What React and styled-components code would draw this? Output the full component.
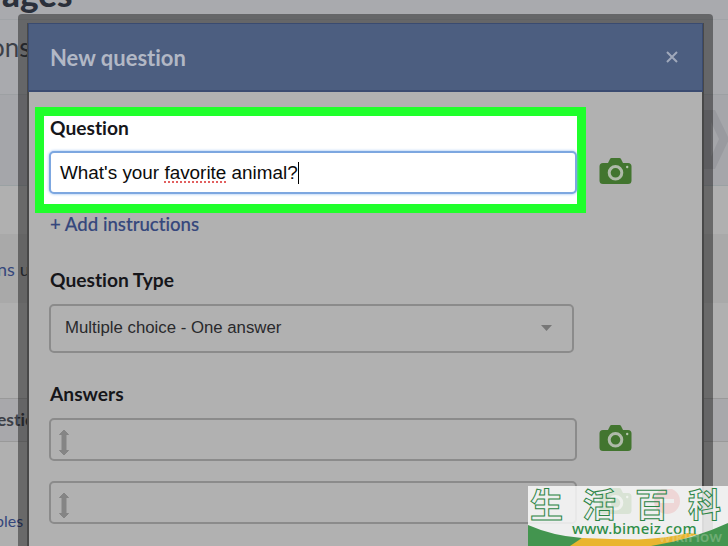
import React from "react";
import styled, { createGlobalStyle } from "styled-components";

const GlobalStyle = createGlobalStyle`
  * {
    box-sizing: border-box;
  }

  body {
    margin: 0;
    overflow: hidden;
    background: #b0b0b0;
    font-family: Lato, sans-serif;
    font-variant-ligatures: none;
  }
`;

const Container = styled.div`
  position: relative;
  width: 728px;
  height: 546px;
  overflow: hidden;
`;

const Page = styled.div`
  height: 100%;
  display: flex;
  flex-direction: column;
`;

const PageRow = styled.div`
  flex: none;
  display: flex;
  align-items: center;
  justify-content: ${(props) => (props.$end ? "flex-end" : "flex-start")};
  height: ${(props) => props.$height}px;
  background: ${(props) => props.$background || "#b0b0b0"};
  border-bottom: ${(props) => (props.$line ? `1px solid ${props.$line}` : "0")};
  white-space: nowrap;
`;

const PageText = styled.span`
  display: block;
  color: ${(props) => props.$color || "#3c4048"};
  font-size: ${(props) => props.$size}px;
  font-weight: ${(props) => props.$weight || 400};
  line-height: 1;
  margin-left: ${(props) => props.$left || 0}px;
  margin-top: ${(props) => props.$top || 0}px;
`;

const Frame = styled.div`
  position: absolute;
  left: 18px;
  top: 14px;
  width: 695px;
  height: 560px;
  padding: 9px 9px 0;
  border-radius: 4px;
  background: rgba(0, 0, 0, 0.4);
`;

const Modal = styled.div`
  height: 100%;
  display: flex;
  flex-direction: column;
  background: #b1b1b1;
  border: 2px solid #484848;
  border-top: 0;
`;

const Header = styled.div`
  flex: none;
  height: 69px;
  margin: 0 -1px;
  padding: 0 24px 0 21px;
  display: flex;
  align-items: center;
  justify-content: space-between;
  background: #4c5e80;
  border: 1px solid #3a4b70;
  border-bottom-width: 2px;
`;

const Title = styled.h1`
  margin: 1px 0 0;
  color: #b2b8c5;
  font-size: 22px;
  font-weight: 700;
  line-height: 28px;
`;

const Body = styled.div`
  display: flex;
  flex-direction: column;
  align-items: flex-start;
  padding: 15px 0 0 6px;
`;

const Row = styled.div`
  display: flex;
  align-items: center;
  gap: ${(props) => props.$gap || 23}px;
  margin-top: ${(props) => props.$top || 0}px;
`;

const Highlight = styled.div`
  width: 551px;
  height: 106px;
  padding: 0 0 0 5px;
  background: #ffffff;
  border: 9px solid #1fff2b;
`;

const Label = styled.div`
  padding-left: 1px;
  color: #16161a;
  font-size: 19.2px;
  font-weight: 700;
  line-height: 24px;
`;

const Input = styled.div`
  width: 528px;
  height: 43px;
  margin-top: 11px;
  padding: 0 0 0 9px;
  display: flex;
  align-items: center;
  background: #ffffff;
  border: 2px solid #7da7e0;
  border-radius: 5px;
  box-shadow: 0 0 3px #8bb8f0;
  color: #0b0b0b;
  font-family: "Liberation Sans", sans-serif;
  font-size: 18.9px;
  white-space: pre;
`;

const Misspelled = styled.span`
  text-decoration: underline dotted #e26060 2px;
  text-underline-offset: 3px;
  text-decoration-skip-ink: none;
`;

const Caret = styled.span`
  width: 1.5px;
  height: 22px;
  background: #000000;
`;

const Fields = styled.div`
  display: flex;
  flex-direction: column;
  align-items: flex-start;
  padding-left: 14px;
`;

const AddLink = styled.a`
  margin: -1px 0 32px 1px;
  color: #35477c;
  font-size: 18.6px;
  font-weight: 500;
  line-height: 24px;
  -webkit-text-stroke: 0.15px #35477c;
`;

const Select = styled.div`
  width: 525px;
  height: 49px;
  margin: 12px 0 29px;
  padding: 0 20px 2px 14px;
  display: flex;
  align-items: center;
  justify-content: space-between;
  border: 2px solid #8b8b8b;
  border-radius: 5px;
  color: #29292c;
  font-family: "Liberation Sans", sans-serif;
  font-size: 16.8px;
`;

const Answer = styled.div`
  width: 528px;
  height: 43px;
  padding: 6px 0 0 7px;
  display: flex;
  align-items: center;
  border: 2px solid #8b8b8b;
  border-radius: 5px;
`;

const CameraIcon = styled.svg`
  margin-top: ${(props) => props.$top || 0}px;
`;

const Watermark = styled.div`
  position: absolute;
  right: 0;
  bottom: 0;
  width: 200px;
  height: 60px;
  overflow: hidden;
  background: rgba(255, 255, 255, 0.8);
`;

const Swoosh = styled.svg`
  position: absolute;
  inset: 0;
`;

const Brand = styled.div`
  position: relative;
  display: flex;
  justify-content: space-between;
  padding: 0 7px 0 2px;
  color: transparent;
  -webkit-text-stroke: 1px #2c8546;
  font-family: "Noto Sans CJK SC", sans-serif;
  font-size: 33px;
  font-weight: 700;
  line-height: 34px;
`;

const Site = styled.div`
  position: relative;
  margin-top: -1px;
  padding-left: 44px;
  color: #2f8d48;
  font-family: "Noto Sans", sans-serif;
  font-size: 15px;
  font-weight: 500;
  letter-spacing: 0.2px;
  line-height: 18px;
`;

const Ghost = styled.div`
  position: absolute;
  right: 6px;
  bottom: 2px;
  color: rgba(225, 235, 215, 0.28);
  font-size: 16px;
  font-weight: 700;
  line-height: 16px;
`;

const Camera = ({ top }) => (
  <CameraIcon $top={top} width="33" height="27" viewBox="0 0 33 27">
    <path
      d="M4 5h5l2-4q.5-1 1.500-1h8q1 0 1.500 1l2 4h5q3.500 0 3.500 3.500v14q0 3.500-3.500 3.500H4Q.5 26 .5 22.500v-14Q.5 5 4 5z"
      fill="#42752f"
    />
    <circle cx="16.500" cy="14.800" r="6.300" fill="none" stroke="#afbaa9" strokeWidth="3" />
    <circle cx="28.200" cy="9" r="1.200" fill="#b5c6ae" />
  </CameraIcon>
);

const DragIcon = () => (
  <svg width="12" height="27" viewBox="0 0 12 27">
    <path
      d="M6 1 10.500 5.500H8V21.500H10.500L6 26 1.500 21.500H4V5.500H1.500z"
      fill="#858585"
      stroke="#858585"
      strokeLinejoin="round"
    />
  </svg>
);

const App = () => {
  return (
    <Container>
      <GlobalStyle />
      <Page>
        <PageRow $height={20} $background="#a9aaae" $line="#a0a3a7">
          <PageText $size={35} $weight={900} $left={2} $top={-33} $color="#2b303b">
            ages
          </PageText>
        </PageRow>
        <PageRow $height={75} $background="#a9aaae" $line="#9da0a3">
          <PageText $size={26} $left={-10} $top={-21}>
            ons
          </PageText>
        </PageRow>
        <PageRow $height={91} $background="#a5a6aa" $line="#9aa1a3" $end>
          <svg width="26" height="91">
            <path d="M0 15h13l14 29-14 30H0z" fill="#999a9f" />
            <path d="M9 27 17 44 9 62z" fill="#a5a6aa" />
          </svg>
        </PageRow>
        <PageRow $height={48} />
        <PageRow $height={69} $background="#a9a9a9">
          <PageText $size={18} $left={-3} $color="#35477c">
            ns
          </PageText>
          <PageText $size={18} $left={5}>
            u
          </PageText>
        </PageRow>
        <PageRow $height={96} $line="#999999" />
        <PageRow $height={43} $background="#a8a8ab" $line="#999999">
          <PageText $size={17.5} $weight={700} $left={-3}>
            estic
          </PageText>
        </PageRow>
        <PageRow $height={104}>
          <PageText $size={16} $left={-5} $top={53} $color="#35477c">
            ples
          </PageText>
        </PageRow>
      </Page>
      <Frame>
        <Modal>
          <Header>
            <Title>New question</Title>
            <svg width="12" height="12" viewBox="0 0 12 12">
              <path d="M1 1 11 11M11 1 1 11" stroke="#a0a9bb" strokeWidth="2" />
            </svg>
          </Header>
          <Body>
            <Row $gap={13}>
              <Highlight>
                <Label>Question</Label>
                <Input>
                  <span>
                    What's your <Misspelled>favorite</Misspelled> animal?
                  </span>
                  <Caret />
                </Input>
              </Highlight>
              <Camera top={23} />
            </Row>
            <Fields>
              <AddLink>+ Add instructions</AddLink>
              <Label>Question Type</Label>
              <Select>
                Multiple choice - One answer
                <svg width="11" height="6">
                  <path d="M0 0h11L5.500 6z" fill="#777777" />
                </svg>
              </Select>
              <Label>Answers</Label>
              <Row $gap={22} $top={12}>
                <Answer>
                  <DragIcon />
                </Answer>
                <Camera top={-2} />
              </Row>
              <Row $gap={22} $top={20}>
                <Answer>
                  <DragIcon />
                </Answer>
                <Camera top={-2} />
                <svg width="28" height="28" viewBox="5 2 28 28">
                  <circle cx="18" cy="14" r="13" fill="#a93636" />
                  <path d="M11 14h14" stroke="#b1b1b1" strokeWidth="4" />
                </svg>
              </Row>
            </Fields>
          </Body>
        </Modal>
      </Frame>
      <Watermark>
        <Swoosh width="200" height="60">
          <path d="M38 60Q46 56 54 52Q82 53 110 53.500Q140 52 160 47L170 48 135 60z" fill="#e9b52f" />
          <path d="M0 39Q25 50 54 52Q48 56 42 60H0z" fill="#43954f" />
          <path d="M123 60Q166 53 200 37V60z" fill="#43954f" />
        </Swoosh>
        <Brand>
          <span>生</span>
          <span>活</span>
          <span>百</span>
          <span>科</span>
        </Brand>
        <Site>www.bimeiz.com</Site>
        <Ghost>wikiHow</Ghost>
      </Watermark>
    </Container>
  );
};

export default App;
